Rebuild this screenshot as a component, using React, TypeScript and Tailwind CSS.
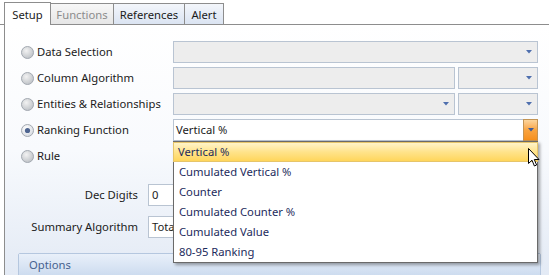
import React from "react";

const font = { fontFamily: '"Noto Sans", "Open Sans", sans-serif' };

function Arrow({ color = "#4f6fae" }: { color?: string }) {
  return (
    <svg width="6" height="4" viewBox="0 0 6 4" className="block">
      <polygon points="0,0 6,0 3,3.5" fill={color} />
    </svg>
  );
}

function Radio({ checked = false }: { checked?: boolean }) {
  return (
    <svg width="13" height="13" viewBox="0 0 13 13" className="block shrink-0">
      <defs>
        <radialGradient id={checked ? "rgc" : "rgu"} cx="0.4" cy="0.35" r="0.7">
          <stop offset="0" stopColor={checked ? "#ffffff" : "#f2f2f2"} />
          <stop offset="1" stopColor={checked ? "#d6dae0" : "#bcc0c5"} />
        </radialGradient>
      </defs>
      <circle cx="6.5" cy="6.5" r="6" fill={`url(#${checked ? "rgc" : "rgu"})`} stroke="#a3a9b1" strokeWidth="1" />
      {checked && <circle cx="6.5" cy="6.5" r="2.6" fill="#4e6590" />}
    </svg>
  );
}

function Combo({ w, arrow = true }: { w: string; arrow?: boolean }) {
  return (
    <div className={`${w} h-[22px] border border-[#b9c4d2] bg-[#ededed] flex items-center justify-end pr-[5px]`}>
      {arrow && <Arrow />}
    </div>
  );
}

function Row({ label, checked, children }: { label: string; checked?: boolean; children: React.ReactNode }) {
  return (
    <div className="flex items-center h-[22px]">
      <div className="w-[168px] flex items-center pl-[16px]">
        <Radio checked={checked} />
        <span className="ml-[3px] text-[#1b1b1b] pt-[1px]">{label}</span>
      </div>
      {children}
    </div>
  );
}

const items = [
  "Vertical %",
  "Cumulated Vertical %",
  "Counter",
  "Cumulated Counter %",
  "Cumulated Value",
  "80-95 Ranking",
];

export default function App() {
  return (
    <div className="w-[549px] h-[275px] overflow-hidden relative bg-white text-[11.25px]" style={font}>
      {/* Tabs */}
      <div className="h-[25px] flex items-end pl-[4px] border-b border-[#8d8d8d]">
        <div className="relative z-10 -mb-px w-[47px] h-[23px] bg-white border-l border-t border-r border-[#8d8d8d] flex items-center justify-center text-[#1b1b1b] leading-none pt-[2px]">
          Setup
        </div>
        <div className="w-[63px] h-[21px] bg-gradient-to-b from-[#f7f7f7] to-[#e6e6e6] border-t border-r border-[#8d8d8d] flex items-center justify-center text-[#8c8c8c] leading-none pt-[1px]">
          Functions
        </div>
        <div className="w-[71px] h-[21px] bg-gradient-to-b from-[#f3f6fb] to-[#dbe4f2] border-t border-r border-[#8d8d8d] flex items-center justify-center text-[#1b1b1b] leading-none pt-[1px]">
          References
        </div>
        <div className="w-[39px] h-[21px] bg-gradient-to-b from-[#f3f6fb] to-[#dbe4f2] border-t border-r border-[#8d8d8d] flex items-center justify-center text-[#1b1b1b] leading-none pt-[1px]">
          Alert
        </div>
      </div>

      {/* Panel */}
      <div className="ml-[4px] h-[250px] border-l border-[#8d8d8d] bg-gradient-to-b from-white via-[#f8fafd] to-[#e3eaf5] pt-[16px]">
        <div className="flex flex-col gap-[4px]">
          <Row label="Data Selection">
            <Combo w="w-[365px]" />
          </Row>
          <Row label="Column Algorithm">
            <Combo w="w-[282px]" arrow={false} />
            <div className="w-[3px]" />
            <Combo w="w-[80px]" />
          </Row>
          <Row label="Entities & Relationships">
            <Combo w="w-[282px]" />
            <div className="w-[3px]" />
            <Combo w="w-[80px]" />
          </Row>
          <Row label="Ranking Function" checked>
            <div className="relative w-[365px] h-[22px]">
              <div className="w-full h-full border border-[#b9c4d2] bg-white flex items-center">
                <span className="pl-[2px] pt-[1px] text-[#1b1b1b] flex-1">Vertical %</span>
                <div className="w-[15px] h-[22px] -mr-px -my-px border border-[#c39454] bg-gradient-to-b from-[#fcd59c] via-[#f9a43f] to-[#f7901b] flex items-start justify-center pt-[8px]">
                  <Arrow color="#3f5b9a" />
                </div>
              </div>
              {/* dropdown */}
              <div className="absolute left-0 top-full w-[365px] z-20 bg-white border border-[#6a6a6a] shadow-[2px_2px_3px_rgba(0,0,0,0.35)]">
                {items.map((t, i) => (
                  <div
                    key={t}
                    className={
                      i === 0
                        ? "h-[20px] flex items-center pl-[4px] pt-[1px] text-[#1d2b5c] bg-gradient-to-b from-[#fff4c8] via-[#ffe38a] to-[#ffd65a] border border-[#e6c56a] -mx-px"
                        : "h-[20px] flex items-center pl-[5px] pt-[1px] text-[#1d2b5c]"
                    }
                  >
                    {t}
                  </div>
                ))}
              </div>
            </div>
          </Row>
          <Row label="Rule">
            <div />
          </Row>
        </div>

        <div className="flex items-center h-[22px] mt-[17px]">
          <div className="w-[133px] text-right text-[#1b1b1b] pt-[1px]">Dec Digits</div>
          <div className="ml-[10px] w-[90px] h-[22px] border border-[#b9c4d2] bg-white flex items-center pl-[3px] pt-[1px] text-[#1b1b1b]">
            0
          </div>
        </div>
        <div className="flex items-center h-[22px] mt-[10px]">
          <div className="w-[133px] text-right text-[#1b1b1b] pt-[1px]">Summary Algorithm</div>
          <div className="ml-[10px] w-[90px] h-[22px] border border-[#b9c4d2] bg-white flex items-center pl-[3px] pt-[1px] text-[#1b1b1b]">
            Total
          </div>
        </div>

        <div className="mt-[15px] ml-[13px] w-[523px] h-[40px] border border-[#b5c7df] rounded-t-[2px] bg-[#eef3fa]">
          <div className="h-[22px] bg-gradient-to-b from-[#e9f0fa] to-[#ccdbef] flex items-center pl-[10px] pt-[1px] text-[#46628f]">
            Options
          </div>
        </div>
      </div>

      {/* mouse cursor */}
      <svg className="absolute left-[528px] top-[148px] z-30" width="13" height="20" viewBox="0 0 13 20">
        <path d="M0.5 0.5 L0.5 15.5 L4 12.2 L6.4 18 L8.6 17 L6.3 11.5 L11 11.5 Z" fill="#ffffff" stroke="#000000" strokeWidth="1" strokeLinejoin="miter" />
      </svg>
    </div>
  );
}
